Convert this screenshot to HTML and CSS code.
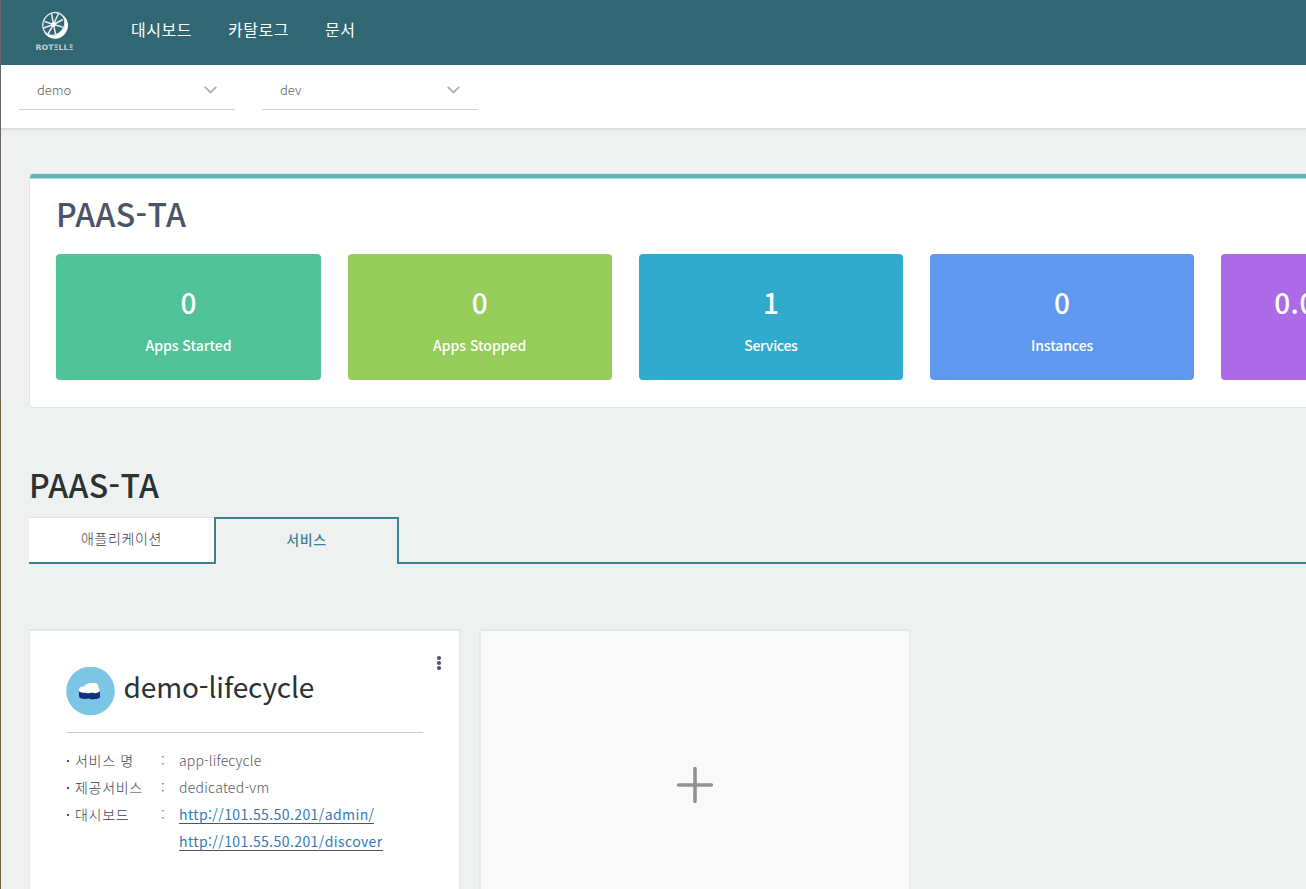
FILE: index.html
```html
<!DOCTYPE html>
<html lang="ko">
<head>
<meta charset="utf-8">
<title>PAAS-TA</title>
<link rel="stylesheet" href="styles.css">
</head>
<body>
<div class="edge"></div>
<div class="page">
  <header class="header">
    <svg class="logo" width="40" height="42" viewBox="0 0 40 42">
      <ellipse cx="20.500" cy="17" rx="12.300" ry="13" transform="rotate(32 20.500 17)" fill="#fff"/>
      <ellipse cx="18.600" cy="14.700" rx="10.200" ry="11.800" transform="rotate(38 18.600 14.700)" fill="#316773"/>
      <g fill="none" stroke="#e3ecee" stroke-width="1.500">
        <ellipse cx="18.900" cy="15" rx="10.600" ry="12" transform="rotate(38 18.900 15)" stroke-width="1.300"/>
        <path d="M18.500 15.500L16.500 4.500M18.500 15.500L23.500 4.500M18.500 15.500L28 10.500M18.500 15.500L27.500 18M18.500 15.500L20.500 25M18.500 15.500L13 25M18.500 15.500L8.500 19M18.500 15.500L9.500 12.500"/>
      </g>
      <circle cx="18.500" cy="15.500" r="2.300" fill="#fff"/>
      <text class="logo-text" x="0.500" y="40.500" textLength="38" lengthAdjust="spacingAndGlyphs">ROTΞLLΞ</text>
    </svg>
    <nav class="nav"><a class="nav-a">대시보드</a><a class="nav-b">카탈로그</a><a class="nav-c">문서</a></nav>
  </header>
  <div class="filters">
    <div class="select"><span class="opt-demo">demo</span><svg width="13" height="8" viewBox="0 0 13 8"><path d="M.7.8L6.500 6.300L12.300.8" fill="none" stroke="#aaa" stroke-width="1.700"/></svg></div>
    <div class="select"><span class="opt-dev">dev</span><svg width="13" height="8" viewBox="0 0 13 8"><path d="M.7.8L6.500 6.300L12.300.8" fill="none" stroke="#aaa" stroke-width="1.700"/></svg></div>
  </div>
  <main class="main">
    <section class="panel">
      <h2 class="title panel-title"><span>PAAS-TA</span></h2>
      <div class="tiles">
        <div class="tile green"><b>0</b><span class="label started">Apps Started</span></div>
        <div class="tile lime"><b>0</b><span class="label stopped">Apps Stopped</span></div>
        <div class="tile cyan"><b>1</b><span class="label services">Services</span></div>
        <div class="tile blue"><b>0</b><span class="label instances">Instances</span></div>
        <div class="tile purple"><b>0.0</b></div>
      </div>
    </section>
    <h2 class="title org-title"><span>PAAS-TA</span></h2>
    <div class="tabs">
      <div class="tab"><span>애플리케이션</span></div>
      <div class="tab active"><span>서비스</span></div>
      <div class="tab-rest"></div>
    </div>
    <div class="cards">
      <article class="card">
        <div class="card-head">
          <svg width="49" height="49" viewBox="0 0 49 49">
            <circle cx="24.500" cy="24" r="24.300" fill="#7bc6e5"/>
            <path d="M13 24.500Q18 27 23 26T34 24V30Q33 32 29 32Q26 33 23 31.500Q18 32.500 14 31Q13 30.500 13 29Z" fill="#122f7d"/>
            <path d="M13 22.800Q13 19.500 18 19.500Q20 16 25 16Q28 15 31.500 17Q33 19 32.500 21Q35 23.500 33 25Q30 27 26 25.500Q22 27 19 25.300Q13 26.500 13 22.800Z" fill="#fff"/>
          </svg>
          <h3 class="card-title">demo-lifecycle</h3>
          <svg class="more" width="6" height="16" viewBox="0 0 6 16"><g fill="#4b5464"><circle cx="3" cy="3" r="2.100"/><circle cx="3" cy="8" r="2.100"/><circle cx="3" cy="13" r="2.100"/></g></svg>
        </div>
        <dl class="info">
          <dt class="k1">서비스 명</dt><dd class="colon">:</dd><dd class="v1">app-lifecycle</dd>
          <dt class="k2">제공서비스</dt><dd class="colon">:</dd><dd class="v2">dedicated-vm</dd>
          <dt class="k3">대시보드</dt><dd class="colon">:</dd><dd><a class="link l1">http://101.55.50.201/admin/</a></dd>
          <dd class="last"><a class="link l2">http://101.55.50.201/discover</a></dd>
        </dl>
      </article>
      <article class="card add">
        <svg width="36" height="36" viewBox="0 0 36 36"><path d="M18 1.700V34.300M1.700 18H34.300" stroke="#929292" stroke-width="3.600" stroke-linecap="round"/></svg>
      </article>
    </div>
  </main>
</div>
</body>
</html>
```
FILE: styles.css
```css
* { box-sizing: border-box; }
body {
  margin: 0; height: 889px; overflow: hidden; display: flex;
  background: #eff1f1; color: #4b5464;
  font: 14px/20px "Noto Sans CJK KR", "Noto Sans", sans-serif;
}
h2, h3, dl, dd { margin: 0; font-weight: 400; }
.edge { width: 1px; flex: none; background: linear-gradient(#666 400px, #75653a 400px); }
.page { flex: 1; min-width: 0; height: 889px; overflow: hidden; }
.header { height: 65px; background: #316773; display: flex; align-items: flex-start; padding: 9px 0 0 34px; }
.logo { display: block; flex: none; }
.logo-text { font: 700 7.5px "DejaVu Sans", sans-serif; fill: #bfd0d4; }
.nav { display: flex; gap: 36px; padding: 8px 0 0 56px; color: #fff; font-size: 16px; line-height: 24px; letter-spacing: .5px; }
.nav a { white-space: nowrap; }
.nav-a, .nav-b { width: 61px; }
.filters { height: 64px; background: #fff; border-bottom: 1px solid #d8dbdb; box-shadow: 0 1px 2px rgba(0,0,0,.08); display: flex; gap: 27px; padding-left: 18px; }
.select { width: 216px; height: 45px; border-bottom: 1px solid #ccd1d1; display: flex; justify-content: space-between; align-items: center; padding: 5px 18px 0; color: #5c5c5c; font-weight: 300; }
.opt-demo, .opt-dev { font-size: 13px; }
.main { padding: 44px 0 0 28px; }
.panel { width: 1560px; height: 235px; border: 1px solid #e2e5e6; border-radius: 4px; background: linear-gradient(#5fb4c0 4px, #b5dbe1 4px, #b5dbe1 5px, #fff 5px); padding: 0 26px; }
.title { font-size: 32px; line-height: 40px; font-weight: 500; letter-spacing: .4px; white-space: nowrap; }
.panel-title { padding-top: 19px; height: 80px; color: #4b5467; }
.tiles { display: grid; grid-template-columns: repeat(5, 264.2px); gap: 27px; margin: 0 -10px 0 .4px; }
.tile { height: 126px; border-radius: 4px; color: #fff; display: flex; flex-direction: column; align-items: center; padding-top: 32px; }
.tile b { font-size: 28px; line-height: 32px; font-weight: 500; }
.label { font-weight: 500; margin-top: 17px; }
.services { letter-spacing: -.3px; }
.instances { letter-spacing: -.1px; }
.green { background: #50c398; }
.lime { background: #96cc59; }
.cyan { background: #30abce; }
.blue { background: #5e99ef; }
.purple { background: #ac6ae6; }
.purple b { align-self: flex-start; padding-left: 53px; letter-spacing: .5px; }
.org-title { margin-top: 56px; height: 53px; color: #2b3235; }
.tabs { display: flex; height: 47px; }
.tab { width: 185px; background: #fff; border-top: 1px solid #e0e4e5; border-bottom: 2px solid #3d8094; text-align: center; line-height: 41px; letter-spacing: .6px; font-weight: 300; color: #353d4a; }
.active { border: 2px solid #3d8094; border-bottom: 0; background: none; color: #3d8094; font-weight: 500; }
.tab-rest { flex: 1; border-bottom: 2px solid #3d8094; }
.cards { display: flex; gap: 18px; padding-top: 65px; }
.card { width: 432px; height: 312px; background: #fff; border: 2px solid #e5e8ea; border-left-width: 1px; padding: 36px 36px 0; }
.card-head { display: flex; height: 66px; border-bottom: 1px solid #c9c9c9; color: #2b3235; }
.card-title { font-size: 28px; line-height: 38px; margin-left: 8.5px; letter-spacing: -.1px; white-space: nowrap; }
.more { margin: -12px -18.5px 0 auto; }
.info { display: grid; grid-template-columns: 95px 18px 1fr; line-height: 27px; padding-top: 14px; }
.info dt { white-space: nowrap; display: flex; align-items: center; gap: 6px; letter-spacing: .7px; font-weight: 300; color: #353d4a; }
.info dt::before { content: ""; width: 2px; height: 2px; margin-left: 1px; background: #4b5464; }
.info dd { color: #535963; white-space: nowrap; font-weight: 300; }
.v1 { letter-spacing: .15px; }
.v2 { letter-spacing: .25px; }
.last { grid-column: 3; }
.info .link { color: #337ab7; border-bottom: 1px solid #4b5464; line-height: 17px; display: inline-block; font-weight: 400; letter-spacing: .4px; }
.add { background: #f9f9f9; border-left-width: 2px; padding: 136px 0 0; }
.add svg { display: block; margin: 0 auto; }
```
